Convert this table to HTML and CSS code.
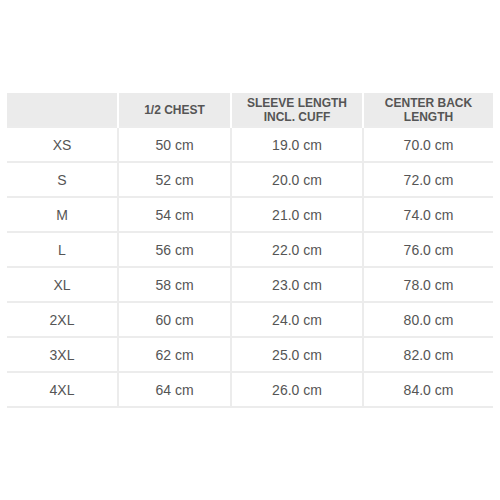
FILE: index.html
```html
<!DOCTYPE html>
<html>
<head>
<meta charset="utf-8">
<link rel="stylesheet" href="styles.css">
</head>
<body>
<table class="size-table">
  <colgroup>
    <col class="c1"><col class="c2"><col class="c3"><col class="c4">
  </colgroup>
  <thead>
    <tr>
      <th></th>
      <th>1/2 CHEST</th>
      <th>SLEEVE LENGTH<br>INCL. CUFF</th>
      <th>CENTER BACK<br>LENGTH</th>
    </tr>
  </thead>
  <tbody>
    <tr><td>XS</td><td>50 cm</td><td>19.0 cm</td><td>70.0 cm</td></tr>
    <tr><td>S</td><td>52 cm</td><td>20.0 cm</td><td>72.0 cm</td></tr>
    <tr><td>M</td><td>54 cm</td><td>21.0 cm</td><td>74.0 cm</td></tr>
    <tr><td>L</td><td>56 cm</td><td>22.0 cm</td><td>76.0 cm</td></tr>
    <tr><td>XL</td><td>58 cm</td><td>23.0 cm</td><td>78.0 cm</td></tr>
    <tr><td>2XL</td><td>60 cm</td><td>24.0 cm</td><td>80.0 cm</td></tr>
    <tr><td>3XL</td><td>62 cm</td><td>25.0 cm</td><td>82.0 cm</td></tr>
    <tr><td>4XL</td><td>64 cm</td><td>26.0 cm</td><td>84.0 cm</td></tr>
  </tbody>
</table>
</body>
</html>
```
FILE: styles.css
```css
html, body {
  margin: 0;
  padding: 0;
  background: #ffffff;
}
body {
  padding: 93px 7px 0 7px;
  font-family: "Liberation Sans", Arial, sans-serif;
  color: #555555;
}
.size-table {
  width: 486px;
  border-collapse: collapse;
  table-layout: fixed;
}
.c1 { width: 111px; }
.c2 { width: 113px; }
.c3 { width: 132px; }
.c4 { width: 130px; }
.size-table th {
  background: #ebebeb;
  height: 33px;
  padding: 0;
  font-size: 12px;
  font-weight: bold;
  line-height: 14px;
  color: #555555;
  text-align: center;
  border-left: 2px solid #ffffff;
  border-bottom: 1px solid #ffffff;
}
.size-table th:first-child { border-left: none; }
.size-table td {
  height: 33px;
  padding: 0;
  font-size: 14px;
  text-align: center;
  border-top: 2px solid #ececec;
  border-left: 2px solid #ececec;
}
.size-table td:first-child { border-left: none; }
.size-table tbody tr:last-child td { border-bottom: 2px solid #ececec; }
```
